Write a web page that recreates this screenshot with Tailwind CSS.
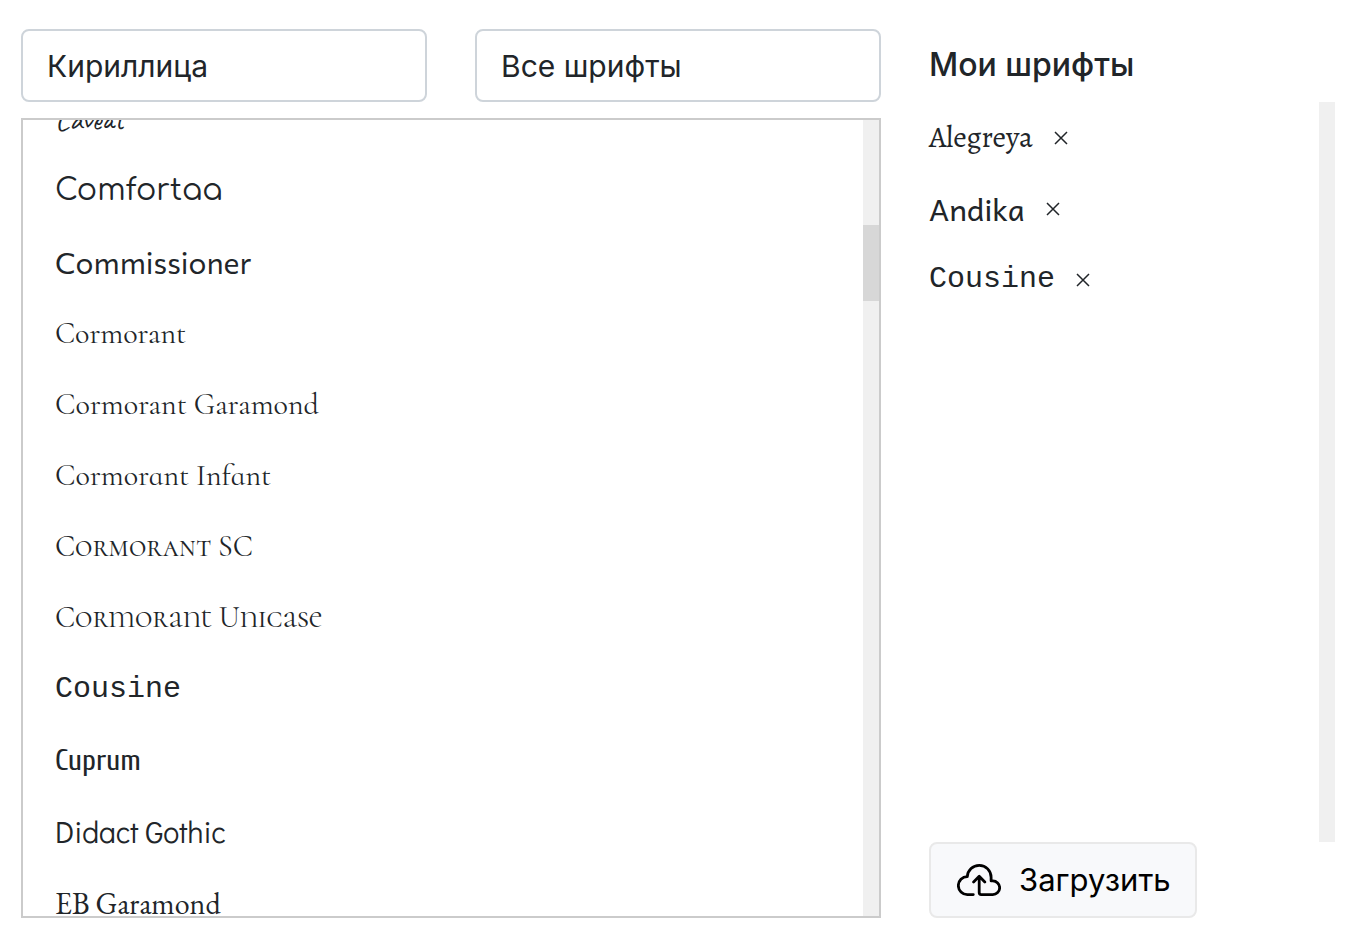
<!DOCTYPE html>
<html lang="ru">
<head>
    <meta charset="UTF-8">
    <meta name="viewport" content="width=device-width, initial-scale=1.0">
    <title>Шрифты</title>
    <script src="https://cdn.jsdelivr.net/npm/@tailwindcss/browser@4"></script>
</head>
<body class="bg-white font-['Inter',sans-serif] text-[30px] text-[#212529]">
    <main class="grid h-screen grid-cols-3 gap-x-12 px-[21px] pt-[29px] pb-4">
        <!-- Font catalogue -->
        <section class="col-span-2 flex min-h-0 flex-col gap-4">
            <div class="grid grid-cols-2 gap-12">
                <select aria-label="Алфавит" class="h-[73px] w-full appearance-none rounded-lg border-2 border-[#ced4da] bg-white px-6 pt-0.5">
                    <option>Кириллица</option>
                </select>
                <select aria-label="Категория" class="h-[73px] w-full appearance-none rounded-lg border-2 border-[#ced4da] bg-white px-6 pt-0.5">
                    <option>Все шрифты</option>
                </select>
            </div>

            <div class="flex min-h-0 flex-1 border-2 border-[#cbcbcb]">
                <ul class="flex-1 overflow-hidden pl-8 whitespace-nowrap">
                    <li class="-mt-9 h-[71px] leading-[71px] font-['Caveat',cursive]"><button>Caveat</button></li>
                    <li class="h-[71px] leading-[71px] font-['Comfortaa','Inter',sans-serif]"><button>Comfortaa</button></li>
                    <li class="h-[72px] leading-[72px] font-['Commissioner','Open_Sans',sans-serif]"><button>Commissioner</button></li>
                    <li class="h-[71px] leading-[71px] font-['Cormorant','Liberation_Serif',serif]"><button>Cormorant</button></li>
                    <li class="h-[71px] leading-[71px] font-['Cormorant_Garamond','Liberation_Serif',serif]"><button>Cormorant Garamond</button></li>
                    <li class="h-[71px] leading-[71px] font-['Cormorant_Infant','Liberation_Serif',serif]"><button>Cormorant Infant</button></li>
                    <li class="h-[71px] leading-[71px] font-['Cormorant_SC','Liberation_Serif',serif]"><button>Cormorant SC</button></li>
                    <li class="h-[71px] leading-[71px] font-['Cormorant_Unicase','Liberation_Serif',serif]"><button>Cormorant Unicase</button></li>
                    <li class="h-[72px] leading-[72px] font-['Cousine','Liberation_Mono',monospace]"><button>Cousine</button></li>
                    <li class="h-[71px] leading-[71px] font-['Cuprum','Liberation_Sans_Narrow',sans-serif]"><button>Cuprum</button></li>
                    <li class="h-[72px] leading-[72px] font-['Didact_Gothic','Lato',sans-serif]"><button>Didact Gothic</button></li>
                    <li class="h-[71px] leading-[71px] font-['EB_Garamond','Liberation_Serif',serif]"><button>EB Garamond</button></li>
                </ul>
                <div class="w-4 bg-[#f0f0f0] pt-[105px]">
                    <div class="h-[76px] bg-[#d7d7d7]"></div>
                </div>
            </div>
        </section>

        <!-- Selected fonts -->
        <section class="flex min-h-0 flex-col items-start">
            <h2 class="h-[73px] text-[32px] leading-[72px] font-medium">Мои шрифты</h2>
            <div class="flex min-h-0 w-full flex-1 justify-between">
                <ul class="whitespace-nowrap">
                    <li class="flex h-[71px] items-center gap-[21px] font-['Alegreya','Liberation_Serif',serif]">Alegreya
                        <button aria-label="Удалить Alegreya"><svg class="size-[14px]" viewBox="0 0 14 14" fill="none" stroke="currentColor" stroke-width="1.5"><path d="M1 1l12 12M13 1L1 13"/></svg></button>
                    </li>
                    <li class="flex h-[71px] items-center gap-[21px] font-['Andika','Open_Sans',sans-serif]">Andika
                        <button aria-label="Удалить Andika"><svg class="size-[14px]" viewBox="0 0 14 14" fill="none" stroke="currentColor" stroke-width="1.5"><path d="M1 1l12 12M13 1L1 13"/></svg></button>
                    </li>
                    <li class="flex h-[71px] items-center gap-[21px] font-['Cousine','Liberation_Mono',monospace]">Cousine
                        <button aria-label="Удалить Cousine"><svg class="size-[14px]" viewBox="0 0 14 14" fill="none" stroke="currentColor" stroke-width="1.5"><path d="M1 1l12 12M13 1L1 13"/></svg></button>
                    </li>
                </ul>
                <div class="w-4 bg-[#f0f0f0]"></div>
            </div>
            <button class="flex h-[76px] items-center gap-[18px] rounded-lg border-2 border-[#e9e9e9] bg-[#f8f9fb] pr-6 pl-[26px] text-[31px] text-black">
                <svg class="h-8 w-11" viewBox="0 0 44 32" fill="none" stroke="currentColor" stroke-width="2.8" stroke-linecap="round" stroke-linejoin="round">
                    <path d="M16.3 30.6H10.4A9 9 0 0 1 10.3 12.6C10.8 6.2 15.8 1.4 22.3 1.4C28.9 1.4 34.1 6.7 34.1 13.2V16.9H35.8A6.8 6.8 0 0 1 35.8 30.6H24.2Q22.2 30.6 22.2 28.6V12.3M16.6 17.9L22.2 12.3L27.8 17.9"/>
                </svg>
                Загрузить
            </button>
        </section>
    </main>
</body>
</html>
